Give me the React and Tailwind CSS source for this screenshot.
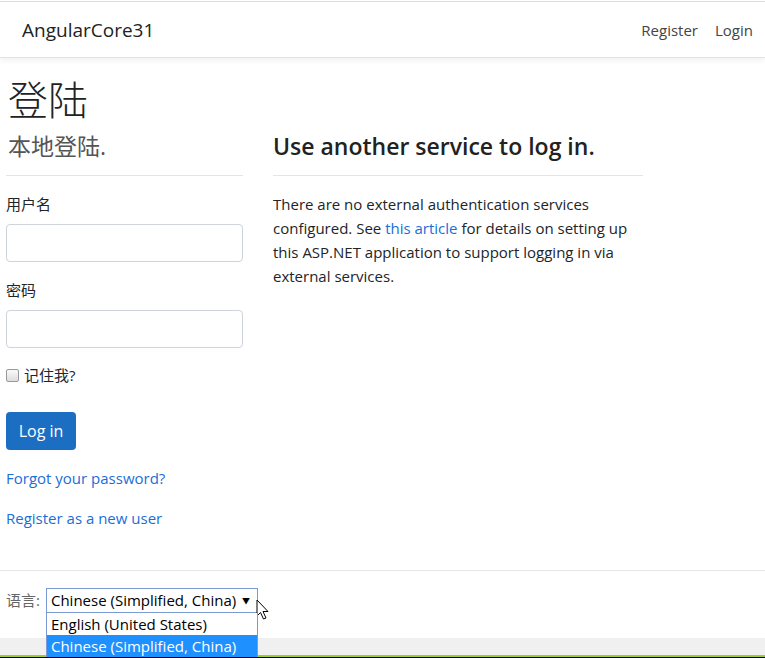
import React from "react";

const sans = "font-['Open_Sans','Noto_Sans_CJK_SC',sans-serif]";

const Cursor = () => (
  <svg width="14" height="22" viewBox="0 0 14 22" className="absolute left-[256px] top-[599px]">
    <path
      d="M1 1 L1 17 L4.5 13.5 L7.5 20 L10 19 L7 12.5 L12 12.5 Z"
      fill="#fff"
      stroke="#000"
      strokeWidth="1"
      strokeLinejoin="round"
    />
  </svg>
);

const App = () => {
  return (
    <div className={`relative h-[658px] w-[765px] overflow-hidden bg-white ${sans} text-[#212529]`}>
      {/* Navbar */}
      <div className="mt-px border-t border-[#dedede]">
        <div className="flex h-[56px] items-center justify-between border-b border-[#e2e2e2] pl-[22px] pr-[12px] pt-[2px] shadow-[0_3px_6px_rgba(0,0,0,0.05)]">
          <span className="text-[19px] text-[#222]">AngularCore31</span>
          <div className="flex gap-[17px] text-[15px] text-[#444]">
            <span>Register</span>
            <span>Login</span>
          </div>
        </div>
      </div>

      {/* Main */}
      <div className="px-[6px] pt-[18px]">
        <h1 className="mb-[7px] pl-[2px] text-[40px] font-light leading-[48px] text-[#222]">登陆</h1>
        <div className="flex gap-[30px]">
          <div className="w-[237px]">
            <h4 className="pl-[2px] text-[23px] leading-[30px] text-[#555]">本地登陆.</h4>
            <hr className="mt-[14px] border-[#e5e5e5]" />
            <div className="mt-[16px] text-[15px] leading-[24px]">用户名</div>
            <input className="mt-[8px] h-[38px] w-full rounded-[4px] border border-[#ced4da]" />
            <div className="mt-[16px] text-[15px] leading-[24px]">密码</div>
            <input className="mt-[8px] h-[38px] w-full rounded-[4px] border border-[#ced4da]" />
            <label className="mt-[15px] flex items-center gap-[5px] text-[15px] leading-[24px]">
              <span className="h-[13px] w-[13px] rounded-[2px] border border-[#999] bg-gradient-to-b from-[#fafafa] to-[#ddd]" />
              记住我?
            </label>
            <button className="mt-[25px] h-[38px] w-[70px] rounded-[4px] bg-[#1b6ec2] text-[16px] text-white">
              Log in
            </button>
            <div className="mt-[16px] text-[15px] leading-[24px] text-[#1a6ed8]">Forgot your password?</div>
            <div className="mt-[16px] text-[15px] leading-[24px] text-[#1a6ed8]">Register as a new user</div>
          </div>
          <div className="w-[370px]">
            <h4 className="text-[23px] font-semibold leading-[30px] text-[#222]">Use another service to log in.</h4>
            <hr className="mt-[14px] border-[#e5e5e5]" />
            <p className="mt-[16px] text-[15px] leading-[24px]">
              There are no external authentication services
              <br />
              configured. See <span className="text-[#1a6ed8]">this article</span> for details on setting up
              <br />
              this ASP.NET application to support logging in via
              <br />
              external services.
            </p>
          </div>
        </div>
      </div>

      {/* Footer */}
      <div className="mt-[40px] border-t border-[#e5e5e5] px-[6px] pt-[17px]">
        <div className="flex items-center gap-[6px] text-[15px]">
          <span className="text-[#666]">语言:</span>
          <div className="relative flex h-[25px] w-[212px] items-center justify-between border border-[#7b9ad3] pl-[4px] pr-[7px] text-[15px] text-black">
            <span>Chinese (Simplified, China)</span>
            <span className="text-[8px]">▼</span>
            <div className="absolute left-[-1px] top-[24px] z-10 w-[212px] border-l border-r border-[#7b9ad3] bg-white">
              <div className="h-[22px] pl-[4px] leading-[22px]">English (United States)</div>
              <div className="h-[22px] bg-[#1e90ff] pl-[4px] leading-[22px] text-white">Chinese (Simplified, China)</div>
            </div>
          </div>
        </div>
      </div>

      {/* Bottom strip */}
      <div className="absolute bottom-0 left-0 right-0 h-[20px] bg-[#f0f0f0]">
        <div className="absolute bottom-[1px] left-0 right-0 h-[2px] bg-[#9acd32]" />
        <div className="absolute bottom-0 left-0 right-0 h-[1px] bg-black" />
      </div>

      <Cursor />
    </div>
  );
};

export default App;
